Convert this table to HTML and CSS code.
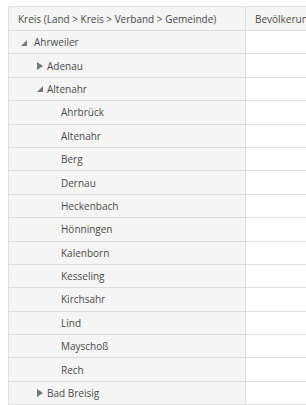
FILE: index.html
```html
<!DOCTYPE html>
<html lang="de">
<head>
<meta charset="utf-8">
<link rel="stylesheet" href="styles.css">
</head>
<body>
<div class="wrap">
<table class="tree">
  <thead>
    <tr><th class="c1">Kreis (Land &gt; Kreis &gt; Verband &gt; Gemeinde)</th><th class="c2">Bevölkerung</th></tr>
  </thead>
  <tbody>
    <tr><td class="c1 l0"><span class="tg open"></span>Ahrweiler</td><td></td></tr>
    <tr><td class="c1 l1"><span class="tg closed"></span>Adenau</td><td></td></tr>
    <tr><td class="c1 l1"><span class="tg open"></span>Altenahr</td><td></td></tr>
    <tr><td class="c1 l2">Ahrbrück</td><td></td></tr>
    <tr><td class="c1 l2">Altenahr</td><td></td></tr>
    <tr><td class="c1 l2">Berg</td><td></td></tr>
    <tr><td class="c1 l2">Dernau</td><td></td></tr>
    <tr><td class="c1 l2">Heckenbach</td><td></td></tr>
    <tr><td class="c1 l2">Hönningen</td><td></td></tr>
    <tr><td class="c1 l2">Kalenborn</td><td></td></tr>
    <tr><td class="c1 l2">Kesseling</td><td></td></tr>
    <tr><td class="c1 l2">Kirchsahr</td><td></td></tr>
    <tr><td class="c1 l2">Lind</td><td></td></tr>
    <tr><td class="c1 l2">Mayschoß</td><td></td></tr>
    <tr><td class="c1 l2">Rech</td><td></td></tr>
    <tr><td class="c1 l1"><span class="tg closed"></span>Bad Breisig</td><td></td></tr>
  </tbody>
</table>
</div>
</body>
</html>
```
FILE: styles.css
```css
html, body {
  margin: 0;
  padding: 0;
  background: #fff;
  overflow: hidden;
}
.wrap {
  padding: 6px 0 0 8px;
  width: 400px;
}
.tree {
  border-collapse: collapse;
  font-family: "Open Sans", sans-serif;
  font-size: 10px;
  color: #4a4a4a;
  table-layout: fixed;
  width: 360px;
}
.tree th, .tree td {
  border: 1px solid #dedede;
  text-align: left;
  font-weight: normal;
  padding: 0 0 0 9px;
  white-space: nowrap;
  overflow: hidden;
}
.tree th {
  height: 23px;
  background: #f5f5f5;
}
.tree td {
  height: 22.4px;
  background: #fff;
}
.tree .c1 {
  width: 227px;
}
.tree td.c1 {
  background: #f5f5f5;
}
.tree td.l0 { padding-left: 12px; }
.tree td.l1 { padding-left: 28px; }
.tree td.l2 { padding-left: 52px; }
.tg {
  display: inline-block;
  width: 0;
  height: 0;
  vertical-align: middle;
  margin-right: 4px;
  position: relative;
  top: -1px;
}
.tg.closed {
  border-style: solid;
  border-width: 4px 0 4px 6px;
  border-color: transparent transparent transparent #777;
}
.tg.open {
  border-style: solid;
  border-width: 0 0 6px 6px;
  border-color: transparent transparent #777 transparent;
}
.l0 .tg.open {
  margin-right: 7px;
}
```
